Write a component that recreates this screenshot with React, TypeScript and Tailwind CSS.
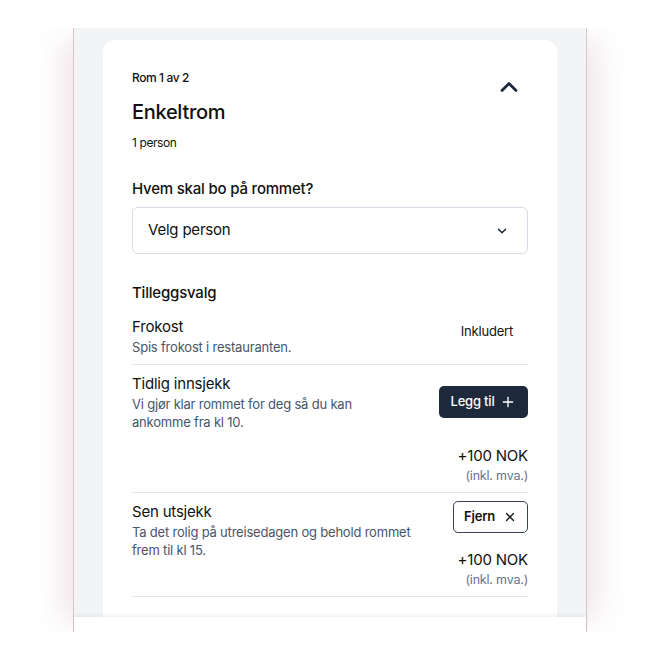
import { ChevronDown, ChevronUp, Plus, X } from 'lucide-react';

const font = { fontFamily: 'Inter, "Noto Sans", sans-serif' };

interface AddonProps {
  title: string;
  lines: string[];
  action: 'add' | 'remove';
  priceGap: string;
}

const Addon = ({ title, lines, action, priceGap }: AddonProps) => (
  <div className="border-b border-[#e2e8f0] pt-[8px] pb-[7px]">
    <div className="flex items-start justify-between">
      <div>
        <p className="text-[15px] leading-[22px] tracking-[-0.2px] text-[#111]">{title}</p>
        {lines.map((line) => (
          <p key={line} className="text-[13px] leading-[18px] tracking-[-0.2px] text-[#475569]">
            {line}
          </p>
        ))}
      </div>
      {action === 'add' ? (
        <button className="mt-[13px] flex h-[32px] w-[89px] items-center justify-center gap-[6px] rounded-[5px] bg-[#1e293b] text-[13px] font-medium tracking-[-0.2px] text-white">
          Legg til <Plus size={16} strokeWidth={2} />
        </button>
      ) : (
        <button className="flex h-[32px] w-[75px] items-center justify-center gap-[8px] rounded-[5px] border border-[#374151] bg-white text-[13px] font-semibold tracking-[-0.2px] text-[#111]">
          Fjern <X size={14} strokeWidth={2.2} />
        </button>
      )}
    </div>
    <div className={`text-right ${priceGap}`}>
      <p className="text-[15px] leading-[22px] tracking-[-0.2px] text-[#111]">+100 NOK</p>
      <p className="text-[12.5px] leading-[18px] tracking-[-0.2px] text-[#64748b]">(inkl. mva.)</p>
    </div>
  </div>
);

const App = () => {
  return (
    <div className="min-h-[660px] bg-white pt-[28px]" style={font}>
      <div className="mx-auto w-[600px] overflow-hidden px-[43px]">
        <div className="w-[514px] border-x border-[#dcc4cb] shadow-[-22px_0_28px_-12px_rgba(170,120,135,0.2),22px_0_28px_-12px_rgba(170,120,135,0.2)]">
          <div className="h-[589px] overflow-hidden bg-[#f3f4f6] px-[29px] pt-[12px]">
            <div className="min-h-[600px] rounded-xl bg-white px-[29px] pt-[30px]">
              <div className="flex h-[16px] items-start justify-between">
                <p className="text-[12px] font-medium leading-[16px] tracking-[-0.4px] text-[#111]">Rom 1 av 2</p>
                <ChevronUp size={28} strokeWidth={2.4} className="mt-[3px] mr-[5px] shrink-0 text-[#1e293b]" />
              </div>
              <h2 className="mt-[12px] text-[20px] font-medium leading-[28px] tracking-[-0.3px] text-[#111]">Enkeltrom</h2>
              <p className="mt-[9px] text-[12px] leading-[16px] tracking-[-0.4px] text-[#111]">1 person</p>

              <p className="mt-[27px] text-[15px] font-medium leading-[22px] tracking-[-0.2px] text-[#111]">
                Hvem skal bo på rommet?
              </p>
              <div className="mt-[7px] flex h-[47px] items-center justify-between rounded-[6px] border border-[#d5dce5] pl-[15px] pr-[18px]">
                <span className="text-[15px] tracking-[-0.2px] text-[#111]">Velg person</span>
                <ChevronDown size={14} strokeWidth={2.6} className="text-[#1e293b]" />
              </div>

              <p className="mt-[28px] text-[15px] font-medium leading-[22px] tracking-[-0.2px] text-[#111]">Tilleggsvalg</p>

              <div className="mt-[12px] flex justify-between border-b border-[#e2e8f0] pb-[8px]">
                <div>
                  <p className="text-[15px] leading-[22px] tracking-[-0.2px] text-[#111]">Frokost</p>
                  <p className="text-[13px] leading-[18px] tracking-[-0.2px] text-[#475569]">Spis frokost i restauranten.</p>
                </div>
                <span className="mt-[6px] mr-[15px] text-[13px] leading-[18px] tracking-[-0.2px] text-[#111]">Inkludert</span>
              </div>

              <Addon
                title="Tidlig innsjekk"
                lines={['Vi gjør klar rommet for deg så du kan', 'ankomme fra kl 10.']}
                action="add"
                priceGap="mt-[14px]"
              />
              <Addon
                title="Sen utsjekk"
                lines={['Ta det rolig på utreisedagen og behold rommet', 'frem til kl 15.']}
                action="remove"
                priceGap="-mt-[10px]"
              />
            </div>
          </div>
          <div className="relative h-[15px] bg-white shadow-[0_-2px_4px_rgba(0,0,0,0.06)]" />
        </div>
      </div>
    </div>
  );
};

export default App;
